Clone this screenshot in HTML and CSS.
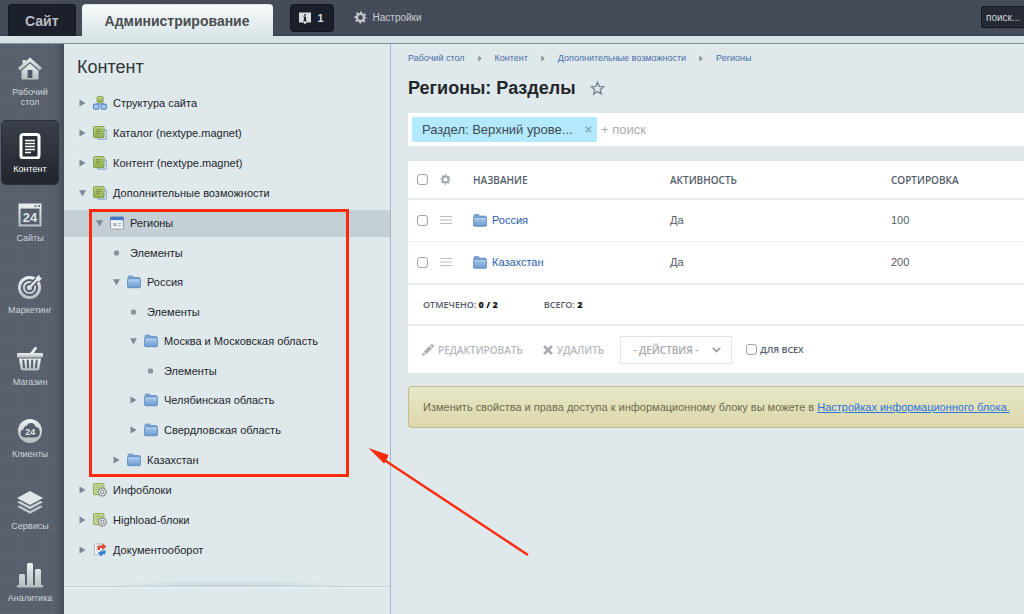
FILE: index.html
```html
<!DOCTYPE html>
<html lang="ru">
<head>
<meta charset="utf-8">
<title>Регионы: Разделы</title>
<link rel="stylesheet" href="styles.css">
</head>
<body>
<svg class="defs" width="0" height="0" aria-hidden="true">
  <defs>
    <linearGradient id="silver" x1="0" y1="0" x2="0" y2="1"><stop offset="0" stop-color="#edf1f2"/><stop offset="1" stop-color="#b4bcbf"/></linearGradient>
    <linearGradient id="blue" x1="0" y1="0" x2="0" y2="1"><stop offset="0" stop-color="#a9cbea"/><stop offset="1" stop-color="#6c9bd0"/></linearGradient>
    <linearGradient id="green" x1="0" y1="0" x2="0" y2="1"><stop offset="0" stop-color="#c5d58a"/><stop offset="1" stop-color="#8fab4e"/></linearGradient>
  </defs>
  <symbol id="folder" viewBox="0 0 14 13"><path d="M1 3V1.6Q1 .6 2 .6h3.2q.8 0 1 .9l.2.6H12q1 0 1 1V4z" fill="#7fa9d6" stroke="#5f8fc6" stroke-width=".8"/><path d="M.6 3.6h12.8v7.6q0 1-1 1H1.6q-1 0-1-1z" fill="url(#blue)" stroke="#5b88bf" stroke-width=".9"/><path d="M1.4 4.4h11.2" stroke="#c5def3" stroke-width=".8"/></symbol>
  <symbol id="structure" viewBox="0 0 14 14"><path d="M7 6v3M3 9V7.5h8V9" fill="none" stroke="#8fa3b8"/><rect x="4" y=".6" width="6.2" height="5.6" rx=".8" fill="url(#green)" stroke="#7c9a45" stroke-width=".8"/><rect x=".5" y="8.2" width="5.4" height="5" rx=".8" fill="#a5c9ee" stroke="#3f74bd" stroke-width=".9"/><rect x="8" y="8.2" width="5.4" height="5" rx=".8" fill="#a5c9ee" stroke="#3f74bd" stroke-width=".9"/></symbol>
  <symbol id="pages" viewBox="0 0 14 14"><path d="M5 4h8.2v9.2H5z" fill="#e9f1fa" stroke="#6d93c6" stroke-width=".9"/><rect x=".5" y=".5" width="10.6" height="11.2" rx="1" fill="url(#green)" stroke="#7c9a45" stroke-width=".9"/><path d="M2.8 3.3h6M2.8 5.3h6M2.8 7.3h4" stroke="#66843a" stroke-width=".8"/></symbol>
  <symbol id="pagesgear" viewBox="0 0 14 14"><rect x=".5" y=".5" width="10.4" height="11.2" rx="1" fill="#c3d590" stroke="#86a34f" stroke-width=".9"/><path d="M2.5 3h6.4M2.5 5h3M2.5 7h2" stroke="#9bb566" stroke-width=".8"/><circle cx="9.3" cy="8.9" r="4" fill="#dfe2e0" stroke="#72797a" stroke-width="1.1" stroke-dasharray="2.2 .5"/><circle cx="9.3" cy="8.9" r="1.7" fill="#f5f7f6" stroke="#72797a" stroke-width=".9"/></symbol>
  <symbol id="window" viewBox="0 0 13 13"><rect x=".5" y=".8" width="12" height="11.4" rx=".8" fill="#f2f4f6" stroke="#8e99a6" stroke-width=".9"/><path d="M.3.8h12.4v3H.3z" fill="#3d78cb"/><path d="M3 6.5h3v2.8H3z" fill="#a7b1ba"/><path d="M7.2 6.8h3.2M7.2 8.8h3.2" stroke="#a7b1ba"/></symbol>
  <symbol id="flow" viewBox="0 0 14 14"><path d="M1.5 1h8v11h-8z" fill="#fff" stroke="#a9b1bc" stroke-width=".9"/><path d="M3 4h3M3 6h2M3 8h1" stroke="#9aa4b0" stroke-width=".7"/><path d="M4.5 7V3.4q0-1 1-1H9V.3l4.6 3.4L9 7V5H7v2z" fill="#d94a38"/><path d="M12.5 7.2v3q0 1-1 1H9v2.2l-4.4-3.2L9 7v2h1V7.2z" fill="#377fd0"/></symbol>
  <symbol id="gear" viewBox="0 0 14 14"><circle cx="7" cy="7" r="3.8" fill="none" stroke="currentColor" stroke-width="2.3"/><circle cx="7" cy="7" r="5.7" fill="none" stroke="currentColor" stroke-width="1.7" stroke-dasharray="2.2 2.277" stroke-dashoffset="1.1"/></symbol>
  <symbol id="right" viewBox="0 0 7 8"><path d="M.5.5 6.6 4 .5 7.6z" fill="#7d8997"/></symbol>
  <symbol id="down" viewBox="0 0 7 8"><path d="M0 1.2h7L3.5 7.4z" fill="#7d8997"/></symbol>
  <symbol id="dot" viewBox="0 0 7 8"><rect x="1" y="1.4" width="5" height="5" rx="1.5" fill="#87939f"/></symbol>
  <symbol id="crumb" viewBox="0 0 4 7"><path d="M.3.3 3.8 3.5.3 6.7z" fill="#8a969c"/></symbol>
  <symbol id="drag" viewBox="0 0 12 8"><path d="M0 .5h12M0 4h12M0 7.5h12" stroke="#b9bec3"/></symbol>
</svg>

<header class="top">
  <nav class="tabs">
    <a class="tab" href="#">Сайт</a>
    <a class="tab tab-active" href="#">Администрирование</a>
  </nav>
  <button class="notice-btn" type="button"><svg width="12" height="13" viewBox="0 0 12 13"><path d="M0 .5h12v10H7.6L6 12.6 4.4 10.5H0z" fill="#d9dde0"/><path d="M5 2.2h2v1.4H5zM4.4 4.6H7v3.6h.8v1H4.2v-1H5V5.6h-.6z" fill="#20242f"/></svg>1</button>
  <a class="settings" href="#"><svg width="13" height="13"><use href="#gear"/></svg>Настройки</a>
  <input class="top-search" type="text" placeholder="поиск..." aria-label="поиск">
</header>

<div class="layout">
  <nav class="side">
    <a class="side-item first" href="#"><svg width="26" height="26" viewBox="0 0 26 26"><path d="M13 1.500 25 12l-2 2.500L13 6 3 14.500 1 12 5.500 8V4h3v1.500z" fill="url(#silver)"/><path d="M4.500 14.800 13 7.600l8.500 7.200V23.500h-17z" fill="url(#silver)"/><path d="M10.600 14h4.800v8h-4.800z" fill="#515a68"/></svg><span>Рабочий стол</span></a>
    <a class="side-item active" href="#"><svg width="26" height="26" viewBox="0 0 26 26"><rect x="4" y="1.500" width="18" height="23.500" rx="2.500" fill="#2b2f38" stroke="#fff" stroke-width="3"/><path d="M8 7.500h10M8 10.500h10M8 13.500h10M8 16.500h10M8 19.500h6" stroke="#fff" stroke-width="1.400"/></svg><span>Контент</span></a>
    <a class="side-item" href="#"><svg width="26" height="26" viewBox="0 0 26 26"><path d="M1.500 1.500h23v23h-23z" fill="url(#silver)"/><path d="M3.600 6.600h18.800v15.800H3.600z" fill="#565e6c"/><path d="M17.500 4h2M21 4h2" stroke="#565e6c" stroke-width="1.600"/><text x="13" y="19.500" text-anchor="middle" class="num24">24</text></svg><span>Сайты</span></a>
    <a class="side-item" href="#"><svg width="26" height="26" viewBox="0 0 26 26"><circle cx="12.500" cy="13.500" r="11.500" fill="url(#silver)"/><circle cx="12.500" cy="13.500" r="7.600" fill="none" stroke="#565e6c" stroke-width="2"/><circle cx="12.500" cy="13.500" r="3.600" fill="none" stroke="#565e6c" stroke-width="2"/><path d="m13.500 12.500 6.500-7" stroke="#565e6c" stroke-width="5"/><path d="m12.500 13.500 7.500-8" stroke="#e4e9ea" stroke-width="2.200"/><path d="M19 6.800V3.500L22.500.8l.4 2.600 2.500.4-3 3.200z" fill="#e4e9ea"/></svg><span>Маркетинг</span></a>
    <a class="side-item" href="#"><svg width="28" height="26" viewBox="0 0 28 26"><path d="m13.500 8 5-6.800q1-1 2 0t.2 1.800L17 8z" fill="#e8eced"/><rect x="1" y="7" width="26" height="4.600" rx="1" fill="url(#silver)"/><path d="M3 12.600h22l-1.600 10q-.3 1.900-2.200 1.900H6.800q-1.900 0-2.200-1.900z" fill="url(#silver)"/><path d="M7.300 14.500 8 21.500M11.800 14.500l.2 7M16.200 14.500l-.2 7M20.700 14.500l-.7 7" stroke="#565e6c" stroke-width="2" stroke-linecap="round"/></svg><span>Магазин</span></a>
    <a class="side-item" href="#"><svg width="26" height="26" viewBox="0 0 26 26"><circle cx="13" cy="13" r="12" fill="url(#silver)"/><path d="M7.500 19.500Q3.500 19 3.500 15.300q0-3.200 2.900-3.900.4-3.200 3.100-3.700 1.500-2.900 4.700-2.600 3.400.3 4.300 3.600 4.200.4 4.400 5.300 0 4.900-4.200 5.500z" fill="#565e6c"/><text x="13.200" y="16.700" text-anchor="middle" class="num24 small24">24</text></svg><span>Клиенты</span></a>
    <a class="side-item" href="#"><svg width="26" height="26" viewBox="0 0 26 26"><path d="M13 1 26 8 13 15 0 8z" fill="#e2e7e8"/><path d="m0 12.300 2.600-1.400L13 16.500l10.400-5.600 2.600 1.400-13 7z" fill="#cdd4d6"/><path d="m0 16.800 2.600-1.400L13 21l10.400-5.600 2.600 1.400-13 7z" fill="#bcc4c7"/></svg><span>Сервисы</span></a>
    <a class="side-item" href="#"><svg width="26" height="26" viewBox="0 0 26 26"><path d="M2 13.500Q2 12 3.500 12h3Q8 12 8 13.500V23h2V2.500Q10 1 11.500 1h3Q16 1 16 2.500V23h2V8.500Q18 7 19.500 7h3Q24 7 24 8.500V23h2v2.500H0V23h2z" fill="url(#silver)"/></svg><span>Аналитика</span></a>
  </nav>

  <aside class="panel">
    <h2 class="panel-title">Контент</h2>
    <ul class="tree">
      <li><a class="row" href="#"><svg class="mark"><use href="#right"/></svg><svg class="ico"><use href="#structure"/></svg>Структура сайта</a></li>
      <li><a class="row" href="#"><svg class="mark"><use href="#right"/></svg><svg class="ico"><use href="#pages"/></svg>Каталог (nextype.magnet)</a></li>
      <li><a class="row" href="#"><svg class="mark"><use href="#right"/></svg><svg class="ico"><use href="#pages"/></svg>Контент (nextype.magnet)</a></li>
      <li><a class="row" href="#"><svg class="mark"><use href="#down"/></svg><svg class="ico"><use href="#pages"/></svg>Дополнительные возможности</a>
        <ul>
          <li class="marked"><a class="row level1 selected" href="#"><svg class="mark"><use href="#down"/></svg><svg class="ico"><use href="#window"/></svg>Регионы</a>
            <ul>
              <li><a class="row level2 leaf" href="#"><svg class="mark"><use href="#dot"/></svg>Элементы</a></li>
              <li><a class="row level2" href="#"><svg class="mark"><use href="#down"/></svg><svg class="ico"><use href="#folder"/></svg>Россия</a>
                <ul>
                  <li><a class="row level3 leaf" href="#"><svg class="mark"><use href="#dot"/></svg>Элементы</a></li>
                  <li><a class="row level3" href="#"><svg class="mark"><use href="#down"/></svg><svg class="ico"><use href="#folder"/></svg>Москва и Московская область</a>
                    <ul>
                      <li><a class="row level4 leaf" href="#"><svg class="mark"><use href="#dot"/></svg>Элементы</a></li>
                    </ul>
                  </li>
                  <li><a class="row level3" href="#"><svg class="mark"><use href="#right"/></svg><svg class="ico"><use href="#folder"/></svg>Челябинская область</a></li>
                  <li><a class="row level3" href="#"><svg class="mark"><use href="#right"/></svg><svg class="ico"><use href="#folder"/></svg>Свердловская область</a></li>
                </ul>
              </li>
              <li><a class="row level2" href="#"><svg class="mark"><use href="#right"/></svg><svg class="ico"><use href="#folder"/></svg>Казахстан</a></li>
            </ul>
          </li>
        </ul>
      </li>
      <li><a class="row" href="#"><svg class="mark"><use href="#right"/></svg><svg class="ico"><use href="#pagesgear"/></svg>Инфоблоки</a></li>
      <li><a class="row" href="#"><svg class="mark"><use href="#right"/></svg><svg class="ico"><use href="#pagesgear"/></svg>Highload-блоки</a></li>
      <li><a class="row" href="#"><svg class="mark"><use href="#right"/></svg><svg class="ico"><use href="#flow"/></svg>Документооборот</a></li>
    </ul>
    <div class="panel-end"></div>
  </aside>

  <main class="main">
    <nav class="crumbs">
      <a href="#">Рабочий стол</a><svg width="4" height="7"><use href="#crumb"/></svg>
      <a href="#">Контент</a><svg width="4" height="7"><use href="#crumb"/></svg>
      <a href="#">Дополнительные возможности</a><svg width="4" height="7"><use href="#crumb"/></svg>
      <a href="#">Регионы</a>
    </nav>
    <h1 class="title">Регионы: Разделы <button class="star" type="button" aria-label="В избранное"><svg width="15" height="15" viewBox="0 0 15 15"><path d="m7.500 1.400 1.700 4 4.400.4-3.300 2.900 1 4.300-3.800-2.300L3.700 13l1-4.300L1.400 5.800l4.400-.4z" fill="none" stroke="#7f8b9b" stroke-width="1.500"/></svg></button></h1>

    <div class="filter">
      <span class="chip"><span class="chip-text">Раздел: Верхний урове...</span><button type="button" aria-label="Убрать"><svg width="7" height="7" viewBox="0 0 7 7"><path d="m.8.8 5.400 5.400M6.200.8.8 6.200" stroke="#7fa9bb" stroke-width="1.300"/></svg></button></span>
      <input class="filter-input" type="text" placeholder="+ поиск" aria-label="Фильтр">
    </div>

    <section class="card">
      <table class="grid">
        <colgroup><col class="c-check"><col class="c-menu"><col class="c-name"><col class="c-active"><col></colgroup>
        <thead><tr>
          <th><input type="checkbox" aria-label="Выбрать все"></th>
          <th><svg class="grey" width="11" height="11"><use href="#gear"/></svg></th>
          <th>НАЗВАНИЕ</th><th>АКТИВНОСТЬ</th><th>СОРТИРОВКА</th>
        </tr></thead>
        <tbody>
          <tr><td><input type="checkbox" aria-label="Россия"></td><td><svg width="12" height="8"><use href="#drag"/></svg></td><td><a href="#"><svg width="14" height="13"><use href="#folder"/></svg>Россия</a></td><td>Да</td><td>100</td></tr>
          <tr><td><input type="checkbox" aria-label="Казахстан"></td><td><svg width="12" height="8"><use href="#drag"/></svg></td><td><a href="#"><svg width="14" height="13"><use href="#folder"/></svg>Казахстан</a></td><td>Да</td><td>200</td></tr>
        </tbody>
      </table>
      <div class="totals"><span>ОТМЕЧЕНО: <b>0 / 2</b></span><span>ВСЕГО: <b>2</b></span></div>
      <div class="actions">
        <button class="act" type="button"><svg width="12" height="12" viewBox="0 0 12 12"><path d="m0 12 1-3.600L3.600 11zM1.700 7.700l5.700-5.700 2.600 2.600-5.700 5.700zM8.100 1.300 9.100.3q.7-.5 1.300 0l1.300 1.300q.5.600 0 1.300l-1 1z" fill="#a9adb2"/></svg>РЕДАКТИРОВАТЬ</button>
        <button class="act" type="button"><svg width="10" height="10" viewBox="0 0 10 10"><path d="m1 1 8 8M9 1 1 9" stroke="#a9adb2" stroke-width="2.600"/></svg>УДАЛИТЬ</button>
        <div class="select-wrap"><select aria-label="Действия"><option>- ДЕЙСТВИЯ -</option></select><svg width="9" height="6" viewBox="0 0 9 6"><path d="m.8.800 3.700 3.700L8.200.8" fill="none" stroke="#8f969f" stroke-width="1.600"/></svg></div>
        <label class="all"><input type="checkbox">ДЛЯ ВСЕХ</label>
      </div>
    </section>

    <p class="note">Изменить свойства и права доступа к информационному блоку вы можете в <a href="#">Настройках информационного блока.</a></p>
  </main>

  <svg class="pointer" width="162" height="110" viewBox="0 0 162 110" aria-hidden="true"><path d="m14 10.500 146 96.500" stroke="#fb2a0c" stroke-width="2.400"/><path d="M.5 0 20.500 7 19 11l-3 4.500z" fill="#fb2a0c"/></svg>
</div>
</body>
</html>
```
FILE: styles.css
```css
* { box-sizing: border-box; }
body {
  margin: 0;
  min-height: 100vh;
  display: flex;
  flex-direction: column;
  overflow: hidden;
  background: #dfe8eb;
  font: 11px/14px "Liberation Sans", Arial, sans-serif;
  color: #22262a;
}
svg { flex: none; display: block; }
.defs { position: absolute; }
a { text-decoration: none; color: inherit; }
button { border: 0; padding: 0; background: none; font: inherit; color: inherit; }
ul { list-style: none; margin: 0; padding: 0; }
h1, h2, p { margin: 0; }

.top {
  display: flex;
  align-items: flex-start;
  height: 44px;
  padding: 4px 0 0 8px;
  border-bottom: 1px solid #8b9599;
  background:
    linear-gradient(#dae5e8, #d5e1e4) 0 36px / 100% 8px no-repeat,
    repeating-linear-gradient(90deg, rgba(255, 255, 255, .02) 0 1px, transparent 1px 5px),
    repeating-linear-gradient(rgba(255, 255, 255, .02) 0 1px, transparent 1px 3px),
    linear-gradient(#434a57 0 34px, #343a45 36px);
}
.tabs { display: flex; gap: 6px; }
.tab {
  height: 32px;
  padding: 0 16px;
  border: 1px solid #14171f;
  border-bottom: 0;
  border-radius: 4px 4px 0 0;
  background: #1c202b;
  color: #b9bdc3;
  font-weight: bold;
  font-size: 14px;
  line-height: 32px;
}
.tab-active {
  padding: 0 22px;
  border-color: transparent;
  background: linear-gradient(#f7fafa, #dae5e8);
  color: #4a4d52;
}
.notice-btn {
  display: flex;
  align-items: center;
  justify-content: center;
  gap: 6px;
  width: 44px;
  height: 28px;
  margin-left: 17px;
  border: 1px solid #12151c;
  border-radius: 4px;
  background: #1b1f2a;
  color: #d9dde0;
  font-weight: bold;
}
.settings {
  display: flex;
  align-items: center;
  gap: 6px;
  height: 27px;
  margin-left: 20px;
  color: #c9cdd2;
  font-size: 10px;
}
.top-search {
  width: 43px;
  height: 22px;
  margin: 2px 0 0 auto;
  padding: 0 0 0 4px;
  border: 1px solid #14171f;
  border-right: 0;
  border-radius: 3px 0 0 3px;
  background: #252a34;
  font: 10px "Liberation Sans", Arial, sans-serif;
}
.top-search::placeholder { color: #d3d6da; opacity: 1; }

.layout { position: relative; display: flex; flex: 1; }
.side {
  width: 64px;
  flex: none;
  padding-right: 6px;
  padding-left: 2px;
  height: calc(100vh - 44px);
  overflow: hidden;
  background:
    linear-gradient(90deg, transparent 85%, #464d5b),
    repeating-linear-gradient(90deg, rgba(0, 0, 0, .04) 0 1px, transparent 1px 3px),
    repeating-linear-gradient(rgba(0, 0, 0, .04) 0 1px, transparent 1px 3px),
    #5b6371;
}
.side-item {
  display: flex;
  flex-direction: column;
  align-items: center;
  gap: 5px;
  min-height: 63px;
  margin-bottom: 9px;
  padding: 12px 4px 10px;
  color: #cfd5da;
  font-size: 9px;
  line-height: 10px;
  text-align: center;
}
.side-item svg { height: 26px; }
.first { margin-bottom: 4px; }
.active {
  margin-bottom: 6px;
  border-radius: 4px;
  background: linear-gradient(#3a404b, #20242b);
  box-shadow: 0 0 0 1px #2b3039;
  color: #fff;
}
.num24 { font: bold 13px "Liberation Sans", Arial, sans-serif; fill: #dfe4e6; }
.small24 { font-size: 9px; }

.panel {
  width: 327px;
  flex: none;
  border-right: 1px solid #9fb8cc;
}
.panel-title {
  padding: 12px 13px 0;
  font-weight: normal;
  font-size: 18px;
  line-height: 22px;
  color: #30353a;
}
.tree { padding-top: 10px; }
.row {
  display: flex;
  align-items: center;
  height: 30px;
  padding-left: 15px;
}
.mark { width: 7px; height: 8px; margin-right: 7px; }
.ico { width: 14px; height: 14px; margin-right: 6px; }
.level1 { padding-left: 32px; }
.level2 { padding-left: 49px; }
.level3 { padding-left: 66px; }
.level4 { padding-left: 83px; }
.leaf { height: 29px; }
.leaf .mark { margin-right: 10px; }
.selected {
  background: linear-gradient(#c5d0d6, #c5d0d6) 0 2px / 100% 27px no-repeat;
}
.marked { position: relative; }
.marked::after {
  content: "";
  position: absolute;
  inset: 1px 41px -2px 25px;
  border: 3px solid #fb2a0c;
  pointer-events: none;
}
.panel-end {
  height: 22px;
  border-bottom: 1px solid #c3d0d7;
  background: radial-gradient(closest-side, rgba(155, 180, 200, .5), transparent) 50% 15px / 76% 16px no-repeat;
  box-shadow: 0 1px 0 #f0f5f6;
}

.main { flex: 1; min-width: 0; padding: 8px 0 0 17px; }
.crumbs {
  display: flex;
  align-items: center;
  gap: 13px;
  height: 12px;
  color: #476ea6;
  font-size: 9px;
  white-space: nowrap;
}
.title {
  display: flex;
  align-items: center;
  gap: 14px;
  margin-top: 12px;
  font-size: 18px;
  line-height: 24px;
}
.filter {
  display: flex;
  align-items: center;
  height: 33px;
  margin-top: 13px;
  padding: 4px;
  background: #fff;
}
.chip {
  display: flex;
  align-items: center;
  justify-content: space-between;
  width: 185px;
  height: 25px;
  padding: 0 5px 0 10px;
  border-radius: 2px;
  background: #b3e9fc;
  color: #3f4a52;
  font-size: 13px;
  white-space: nowrap;
}
.filter-input {
  flex: 1;
  min-width: 0;
  padding: 0 4px;
  border: 0;
  background: none;
  font: 13px "Liberation Sans", Arial, sans-serif;
}
.filter-input::placeholder { color: #a9adb2; opacity: 1; }

.card { margin-top: 15px; background: #fff; font-family: "Open Sans", sans-serif; }
.grid { width: 100%; table-layout: fixed; border-collapse: collapse; }
.c-check { width: 32px; }
.c-menu { width: 33px; }
.c-name { width: 197px; }
.c-active { width: 221px; }
th {
  height: 38px;
  padding: 0;
  border-bottom: 2px solid #e6edef;
  color: #525c69;
  font-size: 10px;
  font-weight: 600;
  text-align: left;
}
td {
  height: 42px;
  padding: 0;
  border-bottom: 1px solid #eef2f3;
  color: #535c69;
  font: 11px "Liberation Sans", Arial, sans-serif;
}
th:first-child, td:first-child { padding-left: 9px; }
tr:last-child td { border-bottom: 2px solid #e6edef; height: 43px; }
td a { display: flex; align-items: center; gap: 5px; color: #2a5db0; }
.grey { color: #a1a7ad; }
input[type="checkbox"] {
  appearance: none;
  display: block;
  width: 11px;
  height: 11px;
  margin: 0;
  border: 1px solid #a0a3a6;
  border-radius: 3px;
  background: #fff;
}
.totals {
  display: flex;
  align-items: center;
  gap: 46px;
  height: 41px;
  padding-left: 15px;
  border-bottom: 2px solid #e6edef;
  color: #535c69;
  font-size: 9px;
  font-weight: 600;
}
.totals b { color: #111; }
.actions {
  display: flex;
  align-items: center;
  height: 47px;
  padding-left: 14px;
  font-size: 10px;
  font-weight: 600;
}
.act {
  display: flex;
  align-items: center;
  gap: 4px;
  margin-right: 20px;
  color: #b4b8bd;
}
.select-wrap { position: relative; margin-left: -4px; }
.select-wrap select {
  appearance: none;
  display: block;
  width: 112px;
  height: 28px;
  padding: 0 12px;
  border: 1px solid #dfe3e6;
  border-radius: 1px;
  background: #fff;
  color: #a3a8ae;
  font: 600 10px "Open Sans", sans-serif;
}
.select-wrap svg { position: absolute; top: 11px; right: 11px; pointer-events: none; }
.all {
  display: flex;
  align-items: center;
  gap: 3px;
  margin-left: 14px;
  color: #535c69;
  font-size: 9px;
}
.note {
  margin-top: 13px;
  padding: 13px 14px;
  border: 1px solid #c4bc8c;
  border-right: 0;
  border-radius: 4px 0 0 4px;
  background: linear-gradient(#e5e7c8, #ddd8ab);
  color: #6f6a4d;
  white-space: nowrap;
  overflow: hidden;
}
.note a { color: #2a75dc; text-decoration: underline; }

.pointer { position: absolute; left: 368px; top: 404px; pointer-events: none; }
```
